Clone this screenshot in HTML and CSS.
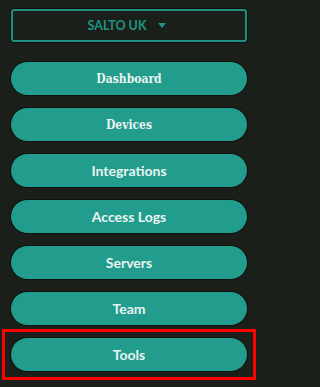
FILE: index.html
```html
<!DOCTYPE html>
<html>
<head>
<meta charset="utf-8">
<link rel="stylesheet" href="styles.css">
</head>
<body>
<nav class="sidebar">
  <button class="org-select">
    <span class="org-name">SALTO UK</span>
    <svg class="caret" width="8" height="5" viewBox="0 0 8 5"><path d="M0 0H8L4 5Z" fill="#1f9483"/></svg>
  </button>
  <ul class="menu">
    <li><a class="menu-btn serif">Dashboard</a></li>
    <li><a class="menu-btn serif">Devices</a></li>
    <li><a class="menu-btn">Integrations</a></li>
    <li><a class="menu-btn">Access Logs</a></li>
    <li><a class="menu-btn">Servers</a></li>
    <li><a class="menu-btn">Team</a></li>
    <li class="highlight"><a class="menu-btn">Tools</a></li>
  </ul>
</nav>
</body>
</html>
```
FILE: styles.css
```css
html, body {
  margin: 0;
  padding: 0;
  background: #1a1f1a;
  height: 100%;
}
.sidebar {
  padding: 9px 13px 0 11px;
  display: flex;
  flex-direction: column;
}
.org-select {
  box-sizing: border-box;
  height: 33px;
  width: 236px;
  background: #1a1f1a;
  border: 2px solid #1f8f80;
  border-radius: 3px;
  box-shadow: 0 0 0 1px #0d100d;
  display: flex;
  align-items: center;
  justify-content: center;
  gap: 12px;
  padding: 0 4px 0 0;
  margin: 0 0 20px 0;
}
.org-name {
  font-family: "Lato", "DejaVu Sans", sans-serif;
  font-weight: 700;
  font-size: 12.5px;
  color: #1f9483;
}
.caret { display: block; }
.menu {
  list-style: none;
  margin: 0;
  padding: 0;
  display: flex;
  flex-direction: column;
  gap: 13px;
  width: 236px;
}
.menu li { display: block; }
.menu-btn {
  display: flex;
  align-items: center;
  justify-content: center;
  height: 33px;
  border-radius: 17px;
  background: #219c8d;
  box-shadow: 0 0 0 1px #0e120e;
  color: #eaf4f0;
  font-family: "Lato", "DejaVu Sans", sans-serif;
  font-weight: 700;
  font-size: 14px;
}
.menu-btn.serif {
  font-family: "DejaVu Serif Condensed", "DejaVu Serif", serif;
  font-stretch: condensed;
  font-size: 12px;
}
.highlight { position: relative; }
.highlight::after {
  content: "";
  position: absolute;
  top: -9px;
  left: -9px;
  right: -9px;
  bottom: -9px;
  border: 3px solid #ff0000;
}
```
